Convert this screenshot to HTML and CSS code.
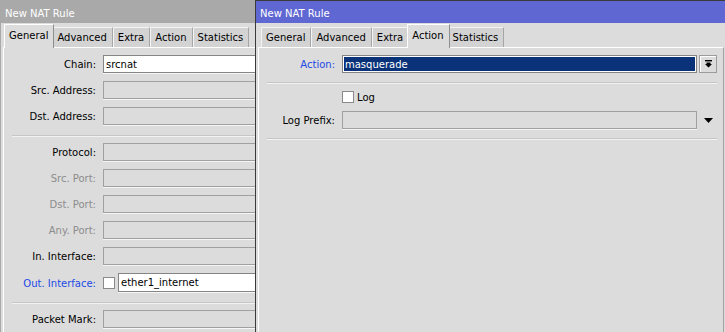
FILE: index.html
```html
<!DOCTYPE html>
<html>
<head>
<meta charset="utf-8">
<title>New NAT Rule</title>
<link rel="stylesheet" href="styles.css">
</head>
<body>
<div class="win win-back">
  <div class="title">New NAT Rule</div>
  <div class="tabs">
    <div class="tab active">General</div>
    <div class="tab">Advanced</div>
    <div class="tab">Extra</div>
    <div class="tab">Action</div>
    <div class="tab">Statistics</div>
  </div>
  <div class="panel">
    <div class="row"><span class="lbl">Chain:</span><div class="field white">srcnat</div></div>
    <div class="row"><span class="lbl">Src. Address:</span><div class="field"></div></div>
    <div class="row"><span class="lbl">Dst. Address:</span><div class="field"></div></div>
    <div class="sep"></div>
    <div class="row"><span class="lbl">Protocol:</span><div class="field"></div></div>
    <div class="row"><span class="lbl dis">Src. Port:</span><div class="field"></div></div>
    <div class="row"><span class="lbl dis">Dst. Port:</span><div class="field"></div></div>
    <div class="row"><span class="lbl dis">Any. Port:</span><div class="field"></div></div>
    <div class="row"><span class="lbl">In. Interface:</span><div class="field"></div></div>
    <div class="row row-tall"><span class="lbl blue">Out. Interface:</span><span class="check"></span><div class="field white">ether1_internet</div></div>
    <div class="sep"></div>
    <div class="row"><span class="lbl">Packet Mark:</span><div class="field"></div></div>
  </div>
</div>

<div class="win win-front">
  <div class="title">New NAT Rule</div>
  <div class="tabs">
    <div class="tab">General</div>
    <div class="tab">Advanced</div>
    <div class="tab">Extra</div>
    <div class="tab active">Action</div>
    <div class="tab">Statistics</div>
  </div>
  <div class="panel">
    <div class="row"><span class="lbl blue">Action:</span><div class="field sel">masquerade</div>
      <div class="btn"><svg width="7" height="8" viewBox="0 0 7 8"><rect x="0" y="0" width="7" height="1.4" fill="#000"/><polygon points="1.5,2.4 5.5,2.4 5.5,4 7,4 3.5,7.6 0,4 1.5,4" fill="#000"/></svg></div>
    </div>
    <div class="sep sep-tight"></div>
    <div class="row row-check"><span class="lbl"></span><span class="check"></span><span class="check-text">Log</span></div>
    <div class="row"><span class="lbl">Log Prefix:</span><div class="field"></div>
      <div class="arrow"><svg width="9" height="5" viewBox="0 0 9 5"><polygon points="0,0 9,0 4.5,5" fill="#000"/></svg></div>
    </div>
    <div class="sep sep-tight"></div>
  </div>
</div>
</body>
</html>
```

FILE: styles.css
```css
* { box-sizing: border-box; }
html, body { margin: 0; padding: 0; }
body {
  width: 725px;
  height: 332px;
  overflow: hidden;
  position: relative;
  background: #dcdcdc;
  font-family: "DejaVu Sans", "Noto Sans", sans-serif;
  font-size: 10px;
  color: #000;
}
.win {
  position: absolute;
  top: 0;
  bottom: -4px;
  display: flex;
  flex-direction: column;
  background: #dcdcdc;
  border: 1px solid #a9a9a9;
}
.win-back { left: 0; width: 300px; }
.win-front {
  left: 255px;
  width: 472px;
  border-color: #3a3a3a;
  z-index: 2;
}
.title {
  height: 22px;
  padding: 3px 0 0 4px;
  line-height: 20px;
  color: #fff;
  background: #a9a9a9;
  flex: none;
}
.win-front .title { background: #5f67d3; }

.tabs {
  height: 24px;
  display: flex;
  align-items: flex-end;
  padding-left: 5px;
  flex: none;
}
.tab {
  height: 20px;
  line-height: 20px;
  padding: 0 5px 0 4px;
  background: #d3d3d3;
  border: 1px solid;
  border-color: #f4f4f4 #a6a6a6 transparent #f4f4f4;
  border-bottom: none;
  color: #000;
  white-space: nowrap;
}
.tab.active {
  position: relative;
  z-index: 1;
  height: 24px;
  line-height: 21px;
  margin: 0 -2px -1px;
  background: #dcdcdc;
  border-color: #ffffff #8e8e8e transparent #ffffff;
}

.panel {
  flex: 1;
  margin: 0 2px;
  padding: 7px 6px 0 0;
  border-top: 1px solid #fff;
  border-left: 1px solid #fff;
  border-right: 1px solid #a2a2a2;
  display: flex;
  flex-direction: column;
  gap: 8px;
}
.row {
  display: flex;
  align-items: center;
  height: 18px;
}
.row-tall { height: 19px; }
.row-check { height: 13px; }
.lbl {
  flex: none;
  text-align: right;
  padding: 1px 7px 0 0;
  white-space: nowrap;
}
.win-back .lbl { width: 99px; }
.win-front .lbl { width: 83px; }
.lbl.dis { color: #8c8c8c; }
.lbl.blue { color: #2149e6; }

.field {
  flex: 1;
  height: 100%;
  min-width: 0;
  border: 1px solid #a0a0a0;
  box-shadow: 0 1px 0 #f6f6f6;
  padding: 1px 0 0 2px;
  line-height: 16px;
  white-space: nowrap;
  overflow: hidden;
}
.field.white {
  background: #fff;
  border-color: #858585;
}
.field.sel {
  background: #0a3279;
  color: #fff;
  border-color: #828282;
  box-shadow: inset 0 0 0 1px #fff;
}
.check {
  flex: none;
  width: 12px;
  height: 12px;
  background: #fff;
  border: 1px solid #8a8a8a;
  margin-right: 3px;
}
.check-text { padding-top: 1px; }
.btn {
  flex: none;
  width: 18px;
  height: 18px;
  margin-left: 2px;
  border: 1px solid #9c9c9c;
  box-shadow: inset 1px 1px 0 #fff;
  display: flex;
  align-items: center;
  justify-content: center;
}
.arrow {
  flex: none;
  width: 18px;
  height: 18px;
  margin-left: 2px;
  display: flex;
  align-items: center;
  justify-content: center;
}
.sep {
  flex: none;
  height: 2px;
  margin: 2px 0 -2px 8px;
  border-top: 1px solid #c6c6c6;
  border-bottom: 1px solid #f2f2f2;
}
.sep-tight { margin-top: 1px; }
```
